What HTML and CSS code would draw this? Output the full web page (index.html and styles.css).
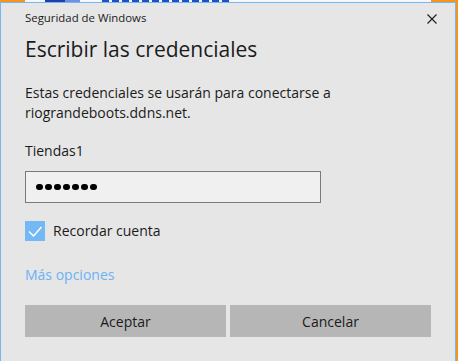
FILE: index.html
```html
<!DOCTYPE html>
<html lang="es">
<head>
  <meta charset="UTF-8" />
  <title>Seguridad de Windows</title>
  <link rel="stylesheet" href="styles.css">
</head>
<body>
  <!-- strip of the window behind the dialog -->
  <div class="backdrop">
    <span class="seg orange w25"></span>
    <span class="seg light w20"></span>
    <span class="seg navy w20"></span>
    <span class="seg sky w15"></span>
    <span class="seg light w22"></span>
    <span class="seg dash w128"></span>
    <span class="seg light fill"></span>
    <span class="seg orange w27"></span>
  </div>

  <div class="stage">
    <div class="dialog">
      <div class="dialog-head">
        <p class="caption">Seguridad de Windows</p>
        <svg class="close" width="10" height="10" viewBox="0 0 10 10">
          <path d="M0.5 0.5 L9.5 9.5 M9.5 0.5 L0.5 9.5" stroke="#1b1b1b" stroke-width="1.1" fill="none" />
        </svg>
      </div>

      <h1>Escribir las credenciales</h1>
      <p class="info">Estas credenciales se usarán para conectarse a<br>riograndeboots.ddns.net.</p>

      <p class="user">Tiendas1</p>
      <div class="password">
        <span class="dot"></span><span class="dot"></span><span class="dot"></span><span class="dot"></span><span class="dot"></span><span class="dot"></span><span class="dot"></span>
      </div>

      <label class="remember">
        <span class="box">
          <svg width="20" height="20" viewBox="0 0 20 20">
            <path d="M4 10.5 L8.5 15 L16.5 6" stroke="#fff" stroke-width="1.5" fill="none" />
          </svg>
        </span>
        Recordar cuenta
      </label>

      <a class="more">Más opciones</a>

      <div class="actions">
        <button>Aceptar</button>
        <button>Cancelar</button>
      </div>
    </div>
    <div class="edge"></div>
  </div>
</body>
</html>
```

FILE: styles.css
```css
/* Base */
body {
  margin: 0;
  font-family: "Open Sans", "Noto Sans", sans-serif;
  background: #e6e6e6;
  color: #1b1b1b;
  width: 458px;
  height: 361px;
  overflow: hidden;
}

/* Backdrop strip */
.backdrop {
  display: flex;
  height: 2px;
}
.seg { display: block; height: 2px; }
.orange { background: #f7941d; }
.light { background: #f4f7fc; }
.navy { background: #1f3fae; }
.sky { background: #6f90e0; }
.dash {
  background: repeating-linear-gradient(90deg, #1d4fc9 0 7px, #f4f7fc 7px 10px);
}
.fill { flex: 1; }
.w15 { width: 15px; }
.w20 { width: 20px; }
.w22 { width: 22px; }
.w25 { width: 25px; }
.w27 { width: 27px; }
.w128 { width: 128px; }

.stage {
  display: flex;
  height: 359px;
}
.edge {
  width: 2px;
  background: #f7941d;
}

/* Dialog */
.dialog {
  flex: 1;
  background: #e6e6e6;
  border: 1px solid #75b7f0;
  border-bottom: none;
  padding: 7px 24px 0 24px;
}

.dialog-head {
  display: flex;
  justify-content: space-between;
  align-items: center;
  height: 16px;
}
.caption {
  margin: 0;
  font-size: 11.4px;
  line-height: 16px;
}
.close {
  margin-right: -6px;
  margin-top: 1px;
}

h1 {
  margin: 9px 0 0;
  font-size: 21px;
  font-weight: 400;
  line-height: 28px;
}

.info {
  margin: 20px 0 0;
  font-size: 14px;
  line-height: 20px;
}

.user {
  margin: 18px 0 0;
  font-size: 14px;
  line-height: 20px;
}

.password {
  display: flex;
  align-items: center;
  gap: 2.5px;
  margin-top: 10px;
  width: 296px;
  height: 32px;
  box-sizing: border-box;
  border: 1px solid #7a7a7a;
  background: #f0f0f0;
  padding-left: 10px;
}
.dot {
  width: 6.5px;
  height: 6.5px;
  border-radius: 50%;
  background: #000;
}

.remember {
  display: flex;
  align-items: center;
  gap: 8px;
  margin-top: 18px;
  font-size: 14px;
  line-height: 20px;
}
.box {
  width: 20px;
  height: 20px;
  background: #74b8f6;
}
.box svg { display: block; }

.more {
  display: block;
  margin-top: 24px;
  font-size: 14px;
  line-height: 20px;
  color: #6cb2f4;
}

.actions {
  display: flex;
  gap: 4px;
  margin-top: 20px;
}
.actions button {
  width: 201px;
  height: 32px;
  border: none;
  background: #b6b6b6;
  font-family: inherit;
  font-size: 14px;
  color: #1b1b1b;
  padding: 0;
}
```
